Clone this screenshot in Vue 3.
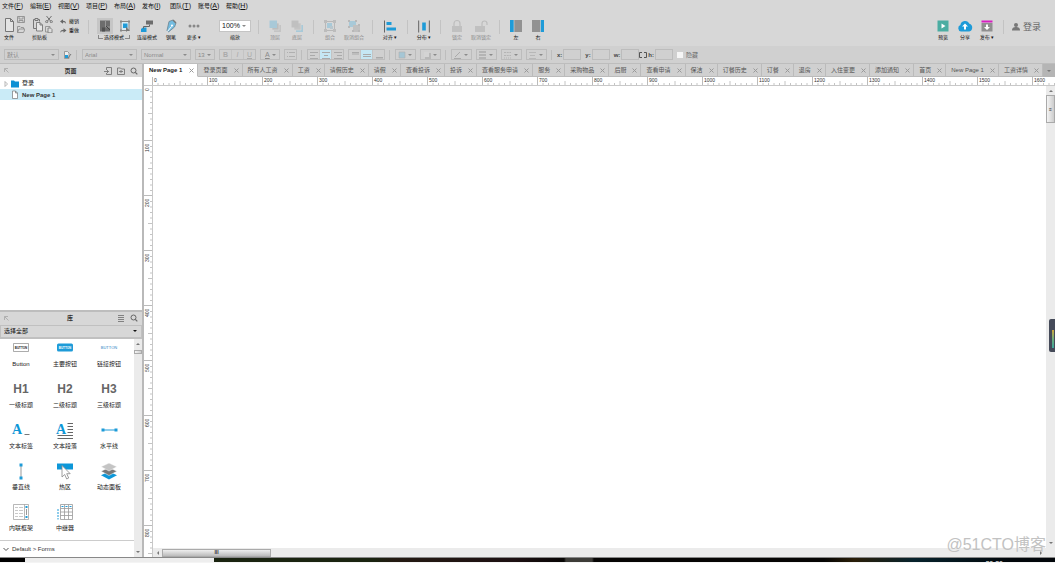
<script setup>
import { ref, onMounted, onBeforeUnmount } from 'vue'

const menus = [
  ['文件', 'F'], ['编辑', 'E'], ['视图', 'V'], ['项目', 'P'], ['布局', 'A'],
  ['发布', 'I'], ['团队', 'T'], ['账号', 'A'], ['帮助', 'H'],
]

const tabs = [
  'New Page 1', '登录页面', '所有人工资', '工资', '请假历史', '请假', '查看投诉', '投诉',
  '查看服务申请', '服务', '采购物品', '后厨', '查看申请', '保洁', '订餐历史', '订餐',
  '退房', '入住变更', '添加通知', '首页', 'New Page 1', '工资详情',
]

const icons = {
  file: '<path d="M1.5 2.5h5l3 3v10h-8z M6.5 2.5v3h3" fill="#e4e4e4" stroke="#777"/>',
  save: '<path d="M.5 .5h7v6h-7z M2 .5v2.5h4v-2.5 M2 6.5v-2h4v2" fill="none" stroke="#888" stroke-width=".8"/>',
  open: '<path d="M.5 6.5v-6h2.500l1 1h2.500v1.500 M.5 6.500l1.500-3.500h6l-1.500 3.500z" fill="none" stroke="#888" stroke-width=".8"/>',
  paste: '<path d="M3 3.500h-1.500v9h3 M6 3.500h1.500v2 M3 2.500h3v2h-3z" fill="none" stroke="#777"/><path d="M4.500 6.500h3.500l2.500 2.500v6h-6z M8 6.500v2.500h2.500" fill="#e6e6e6" stroke="#777" stroke-width=".9"/>',
  cut: '<path d="M1.500 0l4 5 M6.500 0l-4 5" stroke="#666" stroke-width=".9"/><circle cx="1.700" cy="5.700" r="1.100" fill="none" stroke="#666" stroke-width=".8"/><circle cx="6.300" cy="5.700" r="1.100" fill="none" stroke="#666" stroke-width=".8"/>',
  copy: '<path d="M.5 .5h4.500v5.500h-4.500z" fill="none" stroke="#888" stroke-width=".8"/><path d="M3 2h2.500l1.500 1.500v3.300h-4z" fill="#ddd" stroke="#777" stroke-width=".8"/>',
  undo: '<path d="M0 2.500l3-2.300v1.500c2 0 3 .8 3 3.300c-.7-1.500-1.500-1.700-3-1.700v1.500z" fill="#666"/>',
  redo: '<path d="M6.500 2.500l-3-2.300v1.500c-2 0-3.300.8-3.300 3.300c.7-1.500 1.700-1.700 3.300-1.700v1.500z" fill="#666"/>',
  selA: '<path d="M3 2.500h10v11h-10z" fill="#6d6d6d"/><path d="M5 9.500h3v4h-3z" fill="#505050"/><path d="M8.500 3v6h4.500" fill="none" stroke="#999"/><path d="M9 8l4 4" stroke="#444"/>',
  selB: '<path d="M4 3.500h8v9h-8z" fill="#d8eaf3" stroke="#888"/><path d="M6 5.500h4.500v4.500h-4.500z" fill="#1e9bd8"/><path d="M9 8.500l4 4.500h-3l-1 1z" fill="#777"/><path d="M3 2.500h2v2h-2z M11 2.500h2v2h-2z M3 11.500h2v2h-2z" fill="#888"/>',
  link: '<path d="M7 2.500h7v4h-7z" fill="#6d6d6d"/><path d="M4 9.500h3.500v4.500h-5.500v-3z" fill="#1e9bd8"/><path d="M10.500 6.500v2h-6v2" fill="none" stroke="#666"/>',
  pen: '<path d="M6 3.500l4-1.500l3 3l-1.500 4l-6 5l-1.500-1.500z" fill="#73bce0" stroke="#6b8390" stroke-width=".8"/><path d="M4.500 13.500l4-5" stroke="#fff"/><circle cx="9" cy="7.500" r="1.100" fill="#fff"/><path d="M10 2l3 3" stroke="#777" stroke-width="1.500"/>',
  more: '<circle cx="4" cy="8" r="1.500" fill="#888"/><circle cx="8" cy="8" r="1.500" fill="#888"/><circle cx="12" cy="8" r="1.500" fill="#888"/>',
  front: '<path d="M7 7h7v7h-7z" fill="#c4c4c4"/><path d="M5 5h7v7h-7z" fill="#bdbdbd" stroke="#d7d7d7" stroke-width=".7"/><path d="M2.500 2.500h7.500v7.500h-7.500z" fill="#a8c9d8"/>',
  back: '<path d="M7 7h7v7h-7z" fill="#a8c9d8"/><path d="M5 5h7v7h-7z" fill="#c4c4c4" stroke="#d7d7d7" stroke-width=".7"/><path d="M2.500 2.500h7v7h-7z" fill="#c0c0c0"/>',
  group: '<path d="M3.500 3.500h9v9h-9z" fill="none" stroke="#b8b8b8"/><path d="M2 2h3v3h-3z M11 2h3v3h-3z M2 11h3v3h-3z M11 11h3v3h-3z" fill="#bcbcbc"/><path d="M5 5h5v5h-5z" fill="#a8c9d8"/><path d="M8 8h3v3h-3z" fill="#b8c7ce"/>',
  ungroup: '<path d="M3 3h7v6h-7z" fill="#a8c9d8"/><path d="M7 7h7v7h-7z" fill="#c0c0c0"/><path d="M2 2h2v2h-2z M9 2h2v2h-2z M2 8h2v2h-2z M12 6h2v2h-2z M6 12h2v2h-2z M12 12h2v2h-2z" fill="#b8b8b8"/>',
  align: '<path d="M2 2.500h1v12h-1z" fill="#666"/><path d="M4.500 4h5v3h-5z M4.500 9.500h9.500v3h-9.500z" fill="#1e9bd8"/>',
  distribute: '<path d="M2 2.500h1.200v12h-1.200z M12.800 2.500h1.200v12h-1.200z" fill="#777"/><path d="M6.200 4.500h3.600v8h-3.600z" fill="#1e9bd8"/>',
  lock: '<path d="M3 8h10v6h-10z" fill="#c0c0c0"/><path d="M5 8v-2.500a3 3 0 0 1 6 0v2.500" fill="none" stroke="#bdbdbd" stroke-width="1.200"/>',
  unlock: '<path d="M2 8h10v6h-10z" fill="#c0c0c0"/><path d="M9 8v-2.500a2.500 2.500 0 0 1 5 0v1.500" fill="none" stroke="#bdbdbd" stroke-width="1.200"/>',
  left: '<path d="M2 2h12v12h-12z" fill="#929292"/><path d="M2 2h4v12h-4z" fill="#1e9bd8"/><path d="M6 2v12" stroke="#ddd" stroke-width=".6"/>',
  right: '<path d="M2 2h12v12h-12z" fill="#929292"/><path d="M10.500 2h3.500v12h-3.500z" fill="#1e9bd8"/><path d="M10.500 2v12" stroke="#ddd" stroke-width=".6"/>',
  preview: '<path d="M2.500 2.500h11v11h-11z" fill="#4bada2"/><path d="M6.500 5.500l4 2.500l-4 2.500z" fill="#fff"/>',
  share: '<path d="M4 13.500a3.400 3.400 0 0 1-.6-6.500a4.700 4.700 0 0 1 9-1.200a4 4 0 0 1-.2 7.700z" fill="#1e9bd8"/><path d="M8 5.500l3 3h-2v3h-2v-3h-2z" fill="#fff"/>',
  publish: '<path d="M2.500 2.500h11v2h-11z" fill="#d61fc0"/><path d="M2.500 5h11v8.500h-11z" fill="#8f8f8f"/><path d="M8 12l-3-3h2v-2.500h2v2.500h2z" fill="#fff"/>',
  wButton: '<path d="M4.500 5.500h15v8h-15z" fill="#fff" stroke="#888" stroke-width=".7"/>',
  wPrimary: '<rect x="4" y="5.500" width="16" height="8" rx="1.500" fill="#1e9bd8"/>',
  wLabel: '<path d="M15.500 14.500h5" stroke="#777" stroke-width="1"/>',
  wPara: '<path d="M14.500 3.500h5.500 M14.500 6.500h5.500 M14.500 9.500h5.500 M14.500 12.500h5.500 M4.500 15.500h15.500 M4.500 18.500h15.500" stroke="#666" stroke-width="1"/>',
  wH: '<path d="M6 10h13" stroke="#1e9bd8"/><path d="M4.500 8.500h3v3h-3z M17.500 8.500h3v3h-3z" fill="#1e9bd8"/>',
  wV: '<path d="M12 4v13" stroke="#999"/><path d="M10.500 2.500h3v3h-3z M10.500 15.500h3v3h-3z" fill="#1e9bd8"/>',
  wHot: '<path d="M4 2.500h16v6h-16z" fill="#0d97d8"/><path d="M9 4.500v11.500l2.700-2.500l2 4.500l2-1l-2-4.300h3.500z" fill="#fff" stroke="#888" stroke-width=".8"/>',
  wDyn: '<path d="M12 10.500l8 3.700l-8 4.300l-8-4.300z" fill="#0d97d8"/><path d="M12 6.500l8 3.700l-8 4.300l-8-4.300z" fill="#777" stroke="#fff" stroke-width=".5"/><path d="M12 2l8 3.700l-8 4.300l-8-4.300z" fill="#c4c4c4" stroke="#fff" stroke-width=".5"/>',
  wFrame: '<path d="M4.500 2.500h15v15h-15z M15.500 2.500v15" fill="#fff" stroke="#999" stroke-width=".7"/><path d="M6 5.500h3 M10 5.500h4 M6 8.500h3 M10 8.500h4 M6 11.500h3 M10 11.500h4 M6 14.500h3 M10 14.500h4" stroke="#bbb" stroke-width=".8"/><path d="M16.500 4h2v2h-2z M16.500 14h2v2h-2z" fill="#1e9bd8"/><path d="M17.500 7v6" stroke="#999"/>',
  wRepeat: '<path d="M7.500 2.500h12v15h-12z M7.500 6.500h12 M7.500 10h12 M7.500 13.500h12 M11.500 2.500v15 M15.500 2.500v15" fill="#fff" stroke="#999" stroke-width=".8"/><path d="M8.500 4.500h2 M12.500 4.500h2 M16.500 4.500h2" stroke="#1e9bd8"/><path d="M5 7v10.500" stroke="#1e9bd8" stroke-dasharray="2 1"/>',
}

const toolGroups = [
  [{ n: '顶层', i: 'front', off: true }, { n: '底层', i: 'back', off: true }],
  [{ n: '组合', i: 'group', off: true }, { n: '取消组合', i: 'ungroup', off: true, w: 'wide' }],
  [{ n: '对齐 ▾', i: 'align', w: 'mid' }],
  [{ n: '分布 ▾', i: 'distribute' }],
  [{ n: '锁定', i: 'lock', off: true }, { n: '取消锁定', i: 'unlock', off: true, w: 'wide' }],
  [{ n: '左', i: 'left' }, { n: '右', i: 'right' }],
]
const drawTools = [
  { n: '连接模式', i: 'link', w: 'mid' }, { n: '钢笔', i: 'pen', w: 'mid' }, { n: '更多 ▾', i: 'more' },
]
const outputTools = [
  { n: '预览', i: 'preview' }, { n: '分享', i: 'share' }, { n: '发布 ▾', i: 'publish' },
]

const alignH = [
  'M2 2.500h8 M2 5.500h5 M2 8.500h8', 'M2 2.500h8 M4 5.500h4 M2 8.500h8', 'M2 2.500h8 M5 5.500h5 M2 8.500h8',
]
const alignV = ['M3 2.500h7 M3 4h7', 'M2 4.500h8 M2 6.500h8', 'M3 7.500h7 M3 9h7']
const dropA = [
  '<path d="M3 2h6v6h-6z" fill="#a5c6d5" stroke="#b0b0b0" stroke-width=".6"/>',
  '<path d="M4 3h6v6h-6z" fill="#b8b8b8"/><path d="M3 2h5v5h-5z" fill="#d4d4d4"/>',
]
const dropB = [
  '<path d="M3 7l5-5 M2 8.500h7" stroke="#aaa" fill="none"/>',
  '<path d="M2 2h7 M2 5h7 M2 8h7" stroke="#aaa" stroke-width="1.500"/>',
  '<path d="M2 2.500h7 M2 5.500h7" stroke="#b4b4b4" stroke-dasharray="2 .7"/><path d="M2 8h7" stroke="#b4b4b4" stroke-dasharray="1 1"/>',
  '<path d="M2 2.500h7 M3 5.500h5 M2 8.500h7" stroke="#b8b8b8"/>',
]

const widgets = [
  { n: 'Button', i: 'wButton', t: 'BUTTON', c: 'tag' },
  { n: '主要按钮', i: 'wPrimary', t: 'BUTTON', c: 'tag light' },
  { n: '链接按钮', t: 'BUTTON', c: 'tag blue' },
  { n: '一级标题', t: 'H1', c: 'heading' },
  { n: '二级标题', t: 'H2', c: 'heading' },
  { n: '三级标题', t: 'H3', c: 'heading' },
  { n: '文本标签', i: 'wLabel', t: 'A', c: 'letter' },
  { n: '文本段落', i: 'wPara', t: 'A', c: 'letter' },
  { n: '水平线', i: 'wH' },
  { n: '垂直线', i: 'wV' },
  { n: '热区', i: 'wHot' },
  { n: '动态面板', i: 'wDyn' },
  { n: '内联框架', i: 'wFrame' },
  { n: '中继器', i: 'wRepeat' },
]

const STEP = 55
const LABEL = 14
const rulerH = ref(null)
const rulerV = ref(null)
const across = ref([])
const down = ref([])

const range = (n) => Array.from({ length: Math.max(0, n) }, (_, k) => k)
const minor = (n) => range(n * 10).filter((k) => k % 10)
const tickLength = (k) => (k % 5 ? 2 : 4)

function measure() {
  across.value = range(Math.floor((rulerH.value.clientWidth - 8 - LABEL) / STEP) + 1)
  down.value = range(Math.floor((rulerV.value.clientHeight - LABEL) / STEP) + 1)
}
onMounted(() => {
  measure()
  window.addEventListener('resize', measure)
})
onBeforeUnmount(() => window.removeEventListener('resize', measure))
</script>

<template>
  <div class="app">
    <nav class="menu">
      <button v-for="m in menus" :key="m[0]">{{ m[0] }}<span>(<u>{{ m[1] }}</u>)</span></button>
    </nav>

    <div class="toolbar">
      <div class="cluster files">
        <div class="icons">
          <svg width="11" height="17" v-html="icons.file"></svg>
          <div class="stack">
            <svg width="8" height="7" v-html="icons.save"></svg>
            <svg width="8" height="7" v-html="icons.open"></svg>
          </div>
        </div>
        <span>文件</span>
      </div>
      <div class="cluster clip">
        <div class="icons">
          <svg width="11" height="17" v-html="icons.paste"></svg>
          <div class="stack">
            <svg width="8" height="7" v-html="icons.cut"></svg>
            <svg width="8" height="7" v-html="icons.copy"></svg>
          </div>
        </div>
        <span>剪贴板</span>
      </div>
      <div class="history">
        <button><svg width="7" height="5" v-html="icons.undo"></svg>撤销</button>
        <button><svg width="7" height="5" v-html="icons.redo"></svg>重做</button>
      </div>
      <i class="sep"></i>
      <div class="modes">
        <div>
          <button class="on" aria-label="相交选中"><svg width="16" height="16" v-html="icons.selA"></svg></button>
          <button aria-label="包含选中"><svg width="16" height="16" v-html="icons.selB"></svg></button>
        </div>
        <span class="bracket">选择模式</span>
      </div>
      <button v-for="t in drawTools" :key="t.n" class="tool" :class="t.w">
        <svg width="16" height="16" v-html="icons[t.i]"></svg><span>{{ t.n }}</span>
      </button>
      <div class="zoom">
        <span class="drop"><select id="zoom"><option>100%</option></select></span>
        <label for="zoom">缩放</label>
      </div>
      <template v-for="(g, gi) in toolGroups" :key="gi">
        <i class="sep"></i>
        <button v-for="t in g" :key="t.n" class="tool" :class="[t.w, { off: t.off }]">
          <svg width="16" height="16" v-html="icons[t.i]"></svg><span>{{ t.n }}</span>
        </button>
      </template>
      <div class="spacer"></div>
      <button v-for="t in outputTools" :key="t.n" class="tool">
        <svg width="16" height="16" v-html="icons[t.i]"></svg><span>{{ t.n }}</span>
      </button>
      <i class="sep"></i>
      <button class="login">
        <svg width="8" height="8"><circle cx="4" cy="2" r="2" fill="#777" /><path d="M0 7.500c0-3 2-3.500 4-3.500s4 .5 4 3.500z" fill="#777" /></svg>登录
      </button>
    </div>

    <div class="format">
      <span class="drop style"><select aria-label="样式"><option>默认</option></select></span>
      <button class="plain" aria-label="样式管理">
        <svg width="9" height="10"><path d="M1.500 1.500h3l1.500 1.500v5.500h-4.500z" fill="#eee" stroke="#888" stroke-width=".8" /><path d="M2 5h3v3h-3z" fill="#1e9bd8" /><path d="M5 8l3-4" stroke="#777" /></svg>
      </button>
      <i class="bar"></i>
      <span class="drop style"><select aria-label="字体"><option>Arial</option></select></span>
      <span class="drop weight"><select aria-label="字重"><option>Normal</option></select></span>
      <span class="drop size"><select aria-label="字号"><option>13</option></select></span>
      <div class="segment">
        <button><b>B</b></button><button><em>I</em></button><button><u>U</u></button>
      </div>
      <button class="box drop size letter-color" aria-label="颜色"><u>A</u></button>
      <button class="box list" aria-label="列表">
        <svg width="11" height="9"><path d="M2 2.500h1 M4 2.500h6 M2 6.500h1 M4 6.500h6" stroke="#b0b0b0" /></svg>
      </button>
      <i class="bar"></i>
      <div class="segment">
        <button v-for="(d, k) in alignH" :key="k" :class="{ on: k === 1 }" aria-label="水平对齐"><svg width="12" height="10"><path :d="d" stroke="#aaa" /></svg></button>
      </div>
      <div class="segment">
        <button v-for="(d, k) in alignV" :key="k" :class="{ on: k === 1 }" aria-label="垂直对齐"><svg width="12" height="10"><path :d="d" stroke="#aaa" /></svg></button>
      </div>
      <i class="bar"></i>
      <button v-for="(d, k) in dropA" :key="'a' + k" class="box drop swatch" aria-label="填充"><svg width="11" height="10" v-html="d"></svg></button>
      <i class="bar"></i>
      <button v-for="(d, k) in dropB" :key="'b' + k" class="box drop swatch" aria-label="线条"><svg width="11" height="10" v-html="d"></svg></button>
      <i class="bar"></i>
      <label class="coord">x: <input type="text"></label>
      <label class="coord">y: <input type="text"></label>
      <label class="coord">w: <input type="text"></label>
      <label class="coord tight"><svg width="8" height="6"><path d="M3 .5h-2.500v5h2.500 M5 .5h2.500v5h-2.500" fill="none" stroke="#555" /></svg>h: <input type="text"></label>
      <label class="hide"><input type="checkbox">隐藏</label>
    </div>

    <div class="body">
      <aside>
        <section>
          <header>
            <svg class="fold" width="5" height="5"><path d="M.5 4v-3.500h3.500 M.5 .5l4 4" fill="none" stroke="#b0b0b0" /></svg>
            <h2>页面</h2>
            <button aria-label="添加页面"><svg width="8" height="8"><path d="M2.500 3v-2.500h5v7h-5v-1.500 M0 4.500h5 M3.500 3v3" fill="none" stroke="#777" stroke-width=".9" /></svg></button>
            <button aria-label="添加文件夹"><svg width="8" height="8"><path d="M.5 7.500v-6.500h3l1 1h3v5.500z M2 4.500h4 M4 3v3" fill="none" stroke="#777" stroke-width=".9" /></svg></button>
            <button aria-label="搜索页面"><svg width="8" height="8"><circle cx="3.500" cy="3.500" r="2.500" fill="none" stroke="#666" /><path d="M5.300 5.300l2 2" stroke="#666" stroke-width="1.200" /></svg></button>
          </header>
          <ul class="tree">
            <li><svg width="20" height="9"><path d="M5 2.500l2.500 2.500l-2.500 2.500z" fill="#fff" stroke="#999" stroke-width=".7" /><path d="M11 1.500h3l1 1h4v6h-8z" fill="#0d90d4" /></svg>登录</li>
            <li class="picked"><svg width="20" height="9"><path d="M12.500 1h3l2 2v5.500h-5z M15.500 1v2h2" fill="#fff" stroke="#777" stroke-width=".7" /></svg>New Page 1</li>
          </ul>
        </section>
        <section class="library">
          <header>
            <svg class="fold" width="5" height="5"><path d="M.5 4v-3.500h3.500 M.5 .5l4 4" fill="none" stroke="#b0b0b0" /></svg>
            <h2>库</h2>
            <button aria-label="菜单"><svg width="8" height="8"><path d="M1 1.500h6 M1 3.500h6 M1 5.500h6 M1 7.500h6" stroke="#777" stroke-width=".9" /></svg></button>
            <button aria-label="搜索元件"><svg width="8" height="8"><circle cx="3.500" cy="3.500" r="2.500" fill="none" stroke="#666" /><path d="M5.300 5.300l2 2" stroke="#666" stroke-width="1.200" /></svg></button>
          </header>
          <span class="drop pick"><select aria-label="元件库"><option>选择全部</option></select></span>
          <div class="shelf">
            <div class="shelf-main">
              <div class="widgets">
                <div v-for="w in widgets" :key="w.n" class="widget">
                  <div class="art">
                    <svg width="24" height="20" v-html="w.i ? icons[w.i] : ''"></svg>
                    <span v-if="w.t" :class="w.c">{{ w.t }}</span>
                  </div>
                  <span>{{ w.n }}</span>
                </div>
              </div>
              <button class="forms"><svg width="6" height="5"><path d="M.5 1l2.500 2.500l2.500-2.500" fill="none" stroke="#555" /></svg>Default &gt; Forms</button>
            </div>
            <div class="scroll v"><i class="arrow up"></i><i class="thumb short"></i><i class="spacer"></i><i class="arrow down"></i></div>
          </div>
        </section>
      </aside>

      <main>
        <div class="tabs">
          <button v-for="(t, k) in tabs" :key="k" class="tab" :class="{ active: k === 0 }">
            {{ t }}<svg width="5" height="5"><path d="M.5 .5l4 4 M4.500 .5l-4 4" stroke="#999" /></svg>
          </button>
          <button class="overflow" aria-label="更多标签"><i class="arrow down"></i></button>
        </div>
        <div ref="rulerH" class="ruler-h">
          <svg width="100%" height="9">
            <g transform="translate(8 0)">
              <path v-for="k in minor(across.length)" :key="k" :d="`M${k * 5.5 + .5} 8v-${tickLength(k)}`" stroke="#c4c4c4" />
              <g v-for="k in across" :key="k">
                <path :d="`M${k * STEP + .5} 0v8`" stroke="#bbb" />
                <text :x="k * STEP + 2" y="5">{{ k * 100 }}</text>
              </g>
            </g>
          </svg>
        </div>
        <div class="work">
          <div ref="rulerV" class="ruler-v">
            <svg width="9" height="100%">
              <path v-for="k in minor(down.length)" :key="k" :d="`M8 ${k * 5.5}h-${tickLength(k)}`" stroke="#c4c4c4" />
              <g v-for="k in down" :key="k">
                <path :d="`M0 ${k * STEP - .5}h8`" stroke="#bbb" />
                <text :transform="`translate(5 ${k * STEP + (k ? 11 : 5)}) rotate(-90)`">{{ k * 100 }}</text>
              </g>
            </svg>
          </div>
          <div class="stage">
            <div class="stage-row">
              <div class="canvas"></div>
              <div class="scroll v"><i class="arrow up"></i><i class="thumb tall"><b>≡</b></i><i class="spacer"></i><i class="arrow down"></i></div>
            </div>
            <div class="scroll h"><i class="arrow left"></i><i class="thumb long"><b>III</b></i><i class="spacer"></i><i class="arrow right"></i></div>
          </div>
        </div>
      </main>
    </div>

    <div class="taskbar"><i class="start"></i><i class="window"></i><i class="rest"></i><span>20:20</span></div>
    <div class="meter"><i></i></div>
    <div class="watermark">@51CTO博客</div>
  </div>
</template>

<style>
body { margin: 0; overflow: hidden; }
</style>

<style scoped>
.app {
  position: relative;
  display: flex;
  flex-direction: column;
  height: 100vh;
  overflow: hidden;
  background: #d7d7d7;
  color: #333;
  font: 6px/8px "Liberation Sans", "Noto Sans CJK SC", sans-serif;
}
.app * { box-sizing: border-box; }
button, select, input { font: inherit; color: inherit; border: 0; padding: 0; margin: 0; background: none; border-radius: 0; }
svg { display: block; flex: none; }
i { font-style: normal; }
.spacer { flex: 1; }

.menu { display: flex; height: 12px; flex: none; padding-left: 2px; color: #111; }
.menu button { width: 28px; text-align: left; white-space: nowrap; line-height: 10px; padding-bottom: 1px; }
.menu span { font-size: 7px; }

.toolbar { display: flex; flex: none; height: 34px; padding: 6px 14px 0 4px; font-size: 5px; line-height: 6px; color: #111; }
.sep { width: 1px; height: 14px; background: #c3c3c3; margin: 2px 5px 0; flex: none; }
.tool { display: flex; flex-direction: column; align-items: center; width: 22px; height: 24px; white-space: nowrap; flex: none; }
.tool span, .cluster span, .modes span, .zoom label { line-height: 6px; }
.mid { width: 24px; }
.wide { width: 26px; }
.off { color: #888; }
.cluster { width: 28px; margin-top: -2px; flex: none; }
.cluster .icons { display: flex; gap: 2px; height: 18px; }
.cluster .stack { display: flex; flex-direction: column; gap: 3px; }
.cluster span { display: block; }
.clip { width: 27px; }
.history { display: flex; flex-direction: column; gap: 3px; width: 24px; padding-left: 1px; flex: none; }
.history button { display: flex; align-items: center; gap: 2px; height: 6px; white-space: nowrap; }
.modes { width: 41px; padding-left: 3px; flex: none; }
.modes div { display: flex; gap: 4px; }
.modes button { width: 16px; height: 16px; }
.modes .on { background: #c6c6c6; }
.bracket { display: flex; align-items: center; justify-content: center; gap: 1px; width: 34px; white-space: nowrap; }
.bracket::before, .bracket::after { content: ""; width: 4px; height: 3px; border: solid #888; border-width: 0 0 1px 1px; }
.bracket::after { border-width: 0 1px 1px 0; }
.zoom { width: 36px; margin-left: 12px; padding-top: 2px; display: flex; flex-direction: column; align-items: center; gap: 2px; flex: none; }
.zoom .drop { width: 32px; height: 12px; background: #fff; border: 1px solid #c4c4c4; color: #111; font-size: 7px; }
.zoom .drop::after { border-top-color: #888; }
.login { display: flex; align-items: center; gap: 3px; height: 18px; font-size: 9px; color: #666; margin-left: 3px; }

.drop { position: relative; display: flex; align-items: center; flex: none; }
.drop select { appearance: none; width: 100%; height: 100%; padding: 0 8px 0 2px; }
.drop::after {
  content: ""; position: absolute; right: 4px; top: 50%; margin-top: -1px;
  border: 2px solid transparent; border-top-color: currentColor; border-bottom: 0; pointer-events: none;
}

.format { display: flex; align-items: center; gap: 4px; flex: none; height: 17px; padding-left: 4px; background: #d0d0d0; color: #8a8a8a; white-space: nowrap; }
.format .drop, .box { height: 11px; border: 1px solid #bcbcbc; }
.format .drop::after { right: 3px; }
.style { width: 55px; }
.weight { width: 50px; }
.format .size { width: 20px; }
.swatch { width: 21px; }
.list { width: 13px; }
.letter-color { padding-left: 4px; font-size: 7px; }
.bar { width: 1px; height: 10px; background: #bdbdbd; margin-right: 1px; flex: none; }
.segment { display: flex; width: 37px; height: 11px; border: 1px solid #bcbcbc; font-size: 7px; flex: none; }
.segment button { flex: 1; display: flex; align-items: center; justify-content: center; overflow: hidden; color: #aaa; }
.segment button + button { border-left: 1px solid #c4c4c4; }
.segment .on { background: #c5e7f4; }
.coord { display: flex; align-items: center; gap: 1px; color: #444; font-weight: bold; }
.coord input { width: 18px; height: 11px; border: 1px solid #bcbcbc; }
.tight { margin-left: -4px; }
.hide { display: flex; align-items: center; gap: 3px; color: #666; }
.hide input { appearance: none; width: 6px; height: 6px; background: #f6f6f6; }

.body { display: flex; flex: 1; min-height: 0; border-top: 1px solid #bdbdbd; }
aside { display: flex; flex-direction: column; width: 144px; flex: none; border-right: 2px solid #b9b9b9; }
section { display: flex; flex-direction: column; flex: 1; min-height: 0; background: #fff; }
header { display: flex; align-items: center; gap: 5px; height: 13px; flex: none; background: #d7d7d7; padding: 0 4px; }
header h2 { flex: 1; margin: 0; text-align: center; font-size: 6px; font-weight: bold; padding-left: 28px; }
.library h2 { padding-left: 14px; }
.tree { list-style: none; margin: 0; padding: 0; color: #111; }
.tree li { display: flex; align-items: center; gap: 2px; height: 12px; }
.tree .picked { background: #caebf7; height: 11px; font-weight: bold; color: #333; }
.library { border-top: 2px solid #bdbdbd; }
.pick { height: 14px; background: #d7d7d7; border: solid #c0c0c0; border-width: 1px 1px 2px; color: #111; }
.pick select { padding-left: 3px; }
.shelf { display: flex; flex: 1; min-height: 0; }
.shelf-main { display: flex; flex-direction: column; flex: 1; }
.widgets { display: grid; grid-template-columns: repeat(3, 1fr); gap: 0 2px; grid-auto-rows: 41px; flex: 1; overflow: hidden; min-height: 0; padding-right: 4px; }
.widget { display: flex; flex-direction: column; align-items: center; gap: 3px; white-space: nowrap; color: #222; }
.art { display: grid; place-items: center; height: 18px; grid-template-rows: 18px; }
.art > * { grid-area: 1 / 1; }
.tag { font-size: 3px; line-height: 18px; font-weight: bold; }
.light { color: #fff; }
.blue { font-size: 4px; font-weight: normal; color: #2b7fc4; }
.heading { font-size: 12px; line-height: 18px; font-weight: bold; color: #666; }
.letter { font: bold 14px/16px "Liberation Serif", serif; color: #0d97d8; padding-right: 8px; }
.forms { display: flex; align-items: center; gap: 3px; height: 17px; flex: none; padding-left: 3px; border-top: 1px solid #ccc; }

.scroll { display: flex; background: #ebebeb; flex: none; align-items: center; padding: 3px 0; }
.scroll.v { flex-direction: column; width: 9px; }
.shelf .scroll.v { width: 8px; }
.scroll.h { height: 9px; padding: 0 4px; }
.arrow { width: 0; height: 0; border: 2px solid transparent; flex: none; }
.arrow.up { border-bottom-color: #777; border-top: 0; margin: 1px 0 3px; }
.arrow.down { border-top-color: #777; border-bottom: 0; }
.v .arrow.down { margin-bottom: 1px; }
.arrow.left { border-right-color: #777; border-left: 0; margin-right: 3px; }
.arrow.right { border-left-color: #777; border-right: 0; }
.thumb { display: flex; justify-content: center; align-items: center; border: 1px solid #aaa; background: linear-gradient(90deg, #f4f4f4, #ccc); flex: none; color: #333; font-size: 5px; line-height: 5px; }
.short { width: 8px; height: 4px; margin-top: 2px; }
.tall { width: 9px; height: 28px; }
.long { width: 109px; height: 8px; background: linear-gradient(#eee, #bbb); }
.h .arrow.right { margin-right: 9px; }

main { display: flex; flex-direction: column; flex: 1; min-width: 0; background: #fff; }
.tabs { display: flex; height: 13px; flex: none; background: #d0d0d0; overflow: hidden; }
.tab { display: flex; align-items: center; justify-content: space-between; gap: 6px; flex: 1 0 auto; padding: 0 3px 0 5px; border-right: 1px solid #bbb; border-bottom: 1px solid #bbb; color: #555; white-space: nowrap; }
.active { gap: 7px; background: #fff; color: #222; font-weight: bold; border-bottom-color: #fff; }
.overflow { width: 12px; flex: none; background: #b5b5b5; display: grid; place-items: center; }
.ruler-h { height: 9px; flex: none; border-bottom: 1px solid #c8c8c8; overflow: hidden; }
.ruler-v { width: 9px; flex: none; border-right: 1px solid #c8c8c8; overflow: hidden; }
text { font-size: 5px; fill: #333; }
.work { display: flex; flex: 1; min-height: 0; }
.stage { display: flex; flex-direction: column; flex: 1; min-width: 0; }
.stage-row { display: flex; flex: 1; min-height: 0; }
.canvas { flex: 1; background: #fff; }

.taskbar { position: relative; display: flex; height: 6px; flex: none; border-top: 1px solid #888; border-bottom: 1px solid #f4f4f4; overflow: hidden; }
.start { width: 25px; background: #000; }
.window { width: 189px; background: #eee; }
.rest { flex: 1; background: linear-gradient(90deg, #1a2410 0 160px, #241a12 180px, #1d1012 300px, #080605 350px, #3d3c38 352px 378px, #060504 380px 610px, #2a1e08 640px, #06222c 700px, #02060a 800px); }
.taskbar span { position: absolute; right: 52px; top: 2px; font-size: 7px; color: #fff; }
.meter { position: absolute; right: 0; top: 319px; width: 6px; height: 33px; background: #454a59; border-radius: 2px 0 0 2px; padding: 11px 1px 4px 3px; }
.meter i { display: block; height: 100%; background: linear-gradient(#d0a83c, #6fae7c, #3da79c); }
.watermark { position: absolute; right: 9px; bottom: 8px; font-size: 16px; line-height: 20px; color: #c2c2c2; }
</style>
